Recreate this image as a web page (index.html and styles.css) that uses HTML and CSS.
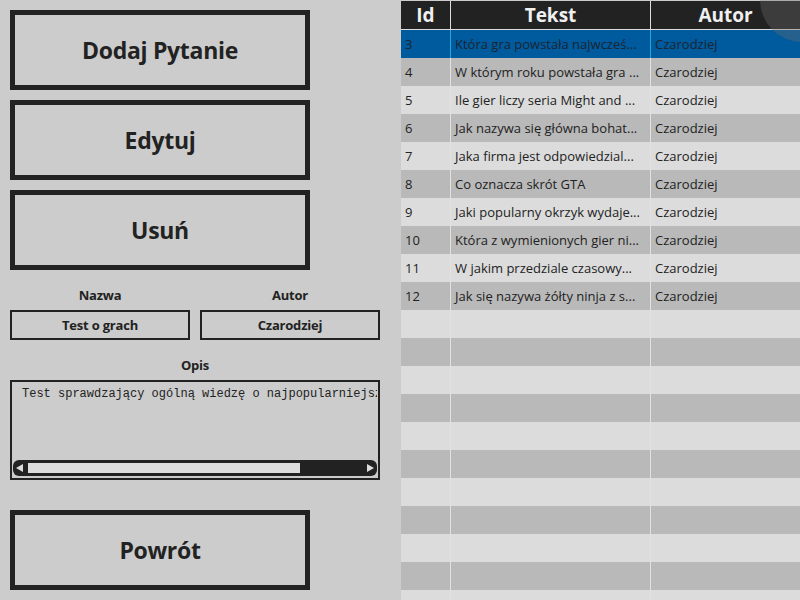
FILE: index.html
```html
<!DOCTYPE html>
<html lang="pl">
<head>
<meta charset="utf-8">
<title>Edycja testu</title>
<link rel="stylesheet" href="styles.css">
</head>
<body>
<div class="app">
  <div class="left">
    <button class="big-btn">Dodaj Pytanie</button>
    <button class="big-btn">Edytuj</button>
    <button class="big-btn">Usuń</button>
    <div class="fields">
      <div class="field">
        <div class="label">Nazwa</div>
        <div class="input">Test o grach</div>
      </div>
      <div class="field">
        <div class="label">Autor</div>
        <div class="input">Czarodziej</div>
      </div>
    </div>
    <div class="label opis-label">Opis</div>
    <div class="textarea">
      <div class="ta-text">Test sprawdzający ogólną wiedzę o najpopularniejszych grach</div>
      <div class="hscroll">
        <span class="arrow arrow-left"></span>
        <div class="track"><div class="thumb"></div></div>
        <span class="arrow arrow-right"></span>
      </div>
    </div>
    <button class="big-btn back">Powrót</button>
  </div>
  <div class="grid">
    <div class="row head">
      <div class="cell">Id</div>
      <div class="cell">Tekst</div>
      <div class="cell">Autor</div>
    </div>
    <div class="row light selected"><div class="cell">3</div><div class="cell">Która gra powstała najwcześ...</div><div class="cell">Czarodziej</div></div>
    <div class="row dark"><div class="cell">4</div><div class="cell">W którym roku powstała gra ...</div><div class="cell">Czarodziej</div></div>
    <div class="row light"><div class="cell">5</div><div class="cell">Ile gier liczy seria Might and ...</div><div class="cell">Czarodziej</div></div>
    <div class="row dark"><div class="cell">6</div><div class="cell">Jak nazywa się główna bohat...</div><div class="cell">Czarodziej</div></div>
    <div class="row light"><div class="cell">7</div><div class="cell">Jaka firma jest odpowiedzial...</div><div class="cell">Czarodziej</div></div>
    <div class="row dark"><div class="cell">8</div><div class="cell">Co oznacza skrót GTA</div><div class="cell">Czarodziej</div></div>
    <div class="row light"><div class="cell">9</div><div class="cell">Jaki popularny okrzyk wydaje...</div><div class="cell">Czarodziej</div></div>
    <div class="row dark"><div class="cell">10</div><div class="cell">Która z wymienionych gier ni...</div><div class="cell">Czarodziej</div></div>
    <div class="row light"><div class="cell">11</div><div class="cell">W jakim przedziale czasowy...</div><div class="cell">Czarodziej</div></div>
    <div class="row dark"><div class="cell">12</div><div class="cell">Jak się nazywa żółty ninja z s...</div><div class="cell">Czarodziej</div></div>
    <div class="row light"><div class="cell"></div><div class="cell"></div><div class="cell"></div></div>
    <div class="row dark"><div class="cell"></div><div class="cell"></div><div class="cell"></div></div>
    <div class="row light"><div class="cell"></div><div class="cell"></div><div class="cell"></div></div>
    <div class="row dark"><div class="cell"></div><div class="cell"></div><div class="cell"></div></div>
    <div class="row light"><div class="cell"></div><div class="cell"></div><div class="cell"></div></div>
    <div class="row dark"><div class="cell"></div><div class="cell"></div><div class="cell"></div></div>
    <div class="row light"><div class="cell"></div><div class="cell"></div><div class="cell"></div></div>
    <div class="row dark"><div class="cell"></div><div class="cell"></div><div class="cell"></div></div>
    <div class="row light"><div class="cell"></div><div class="cell"></div><div class="cell"></div></div>
    <div class="row dark"><div class="cell"></div><div class="cell"></div><div class="cell"></div></div>
    <div class="row light"><div class="cell"></div><div class="cell"></div><div class="cell"></div></div>
    <div class="corner-circle"></div>
  </div>
</div>
</body>
</html>
```
FILE: styles.css
```css
* { box-sizing: border-box; }
html, body {
  margin: 0;
  padding: 0;
  width: 800px;
  height: 600px;
  overflow: hidden;
  background: #cccccc;
  font-family: "Open Sans", "Noto Sans", sans-serif;
  color: #222222;
}
.app {
  display: flex;
  width: 800px;
  height: 600px;
}
.left {
  width: 401px;
  flex: none;
  padding: 10px 0 0 10px;
  display: flex;
  flex-direction: column;
}
.big-btn {
  width: 300px;
  height: 80px;
  border: 5px solid #222222;
  background: #cccccc;
  font-family: "Open Sans", "Noto Sans", sans-serif;
  font-weight: 700;
  font-size: 23px;
  color: #222222;
  margin: 0 0 10px 0;
  padding: 0;
  letter-spacing: -0.3px;
}
.big-btn.back {
  margin-top: 30px;
}
.fields {
  display: grid;
  grid-template-columns: 180px 180px;
  column-gap: 10px;
  margin-top: 7px;
}
.field {
  display: flex;
  flex-direction: column;
}
.label {
  font-weight: 700;
  font-size: 13px;
  text-align: center;
  height: 23px;
  line-height: 16px;
  letter-spacing: -0.2px;
}
.input {
  height: 30px;
  border: 2px solid #222222;
  font-weight: 700;
  font-size: 13px;
  text-align: center;
  line-height: 26px;
  letter-spacing: -0.2px;
}
.opis-label {
  width: 370px;
  margin-top: 17px;
}
.textarea {
  width: 370px;
  height: 100px;
  border: 2px solid #222222;
  position: relative;
  display: flex;
  flex-direction: column;
  justify-content: space-between;
  padding: 5px 1px 2px 1px;
  overflow: hidden;
}
.ta-text {
  font-family: "Liberation Mono", monospace;
  font-size: 12px;
  white-space: nowrap;
  overflow: hidden;
  padding-left: 9px;
  color: #222222;
}
.hscroll {
  height: 16px;
  background: #222222;
  border-radius: 6px;
  display: flex;
  align-items: center;
  padding: 0 3px;
}
.arrow {
  width: 0;
  height: 0;
  border-top: 4px solid transparent;
  border-bottom: 4px solid transparent;
  flex: none;
}
.arrow-left { border-right: 7px solid #dddddd; }
.arrow-right { border-left: 7px solid #dddddd; }
.track {
  flex: 1;
  height: 10px;
  margin: 0 5px;
}
.thumb {
  width: 272px;
  height: 10px;
  background: #dddddd;
}
.grid {
  position: relative;
  flex: 1;
  overflow: hidden;
  padding-top: 1px;
}
.row {
  display: grid;
  grid-template-columns: 49px 200px 1fr;
  height: 28px;
  font-size: 13px;
}
.row.light { background: #dcdcdc; }
.row.dark { background: #b9b9b9; }
.row.selected { background: #005a9e; }
.cell {
  border-left: 1px solid #e2e2e2;
  padding-left: 4px;
  line-height: 29px;
  white-space: nowrap;
  overflow: hidden;
  text-overflow: ellipsis;
  color: #222222;
}
.cell:first-child { border-left: none; }
.row.selected .cell { border-left-color: #22a8dc; color: #1c2530; }
.row.selected .cell:first-child { border-left: none; }
.row.head {
  background: #222222;
  height: 29px;
  border-bottom: 1px solid #dddddd;
}
.row.head .cell {
  color: #f0f0f0;
  font-weight: 700;
  font-size: 19px;
  text-align: center;
  padding-left: 0;
  line-height: 28px;
  border-left-color: #dddddd;
}
.corner-circle {
  position: absolute;
  width: 84px;
  height: 84px;
  border-radius: 50%;
  left: 359px;
  top: -42px;
  background: rgba(110, 110, 110, 0.35);
}
```
